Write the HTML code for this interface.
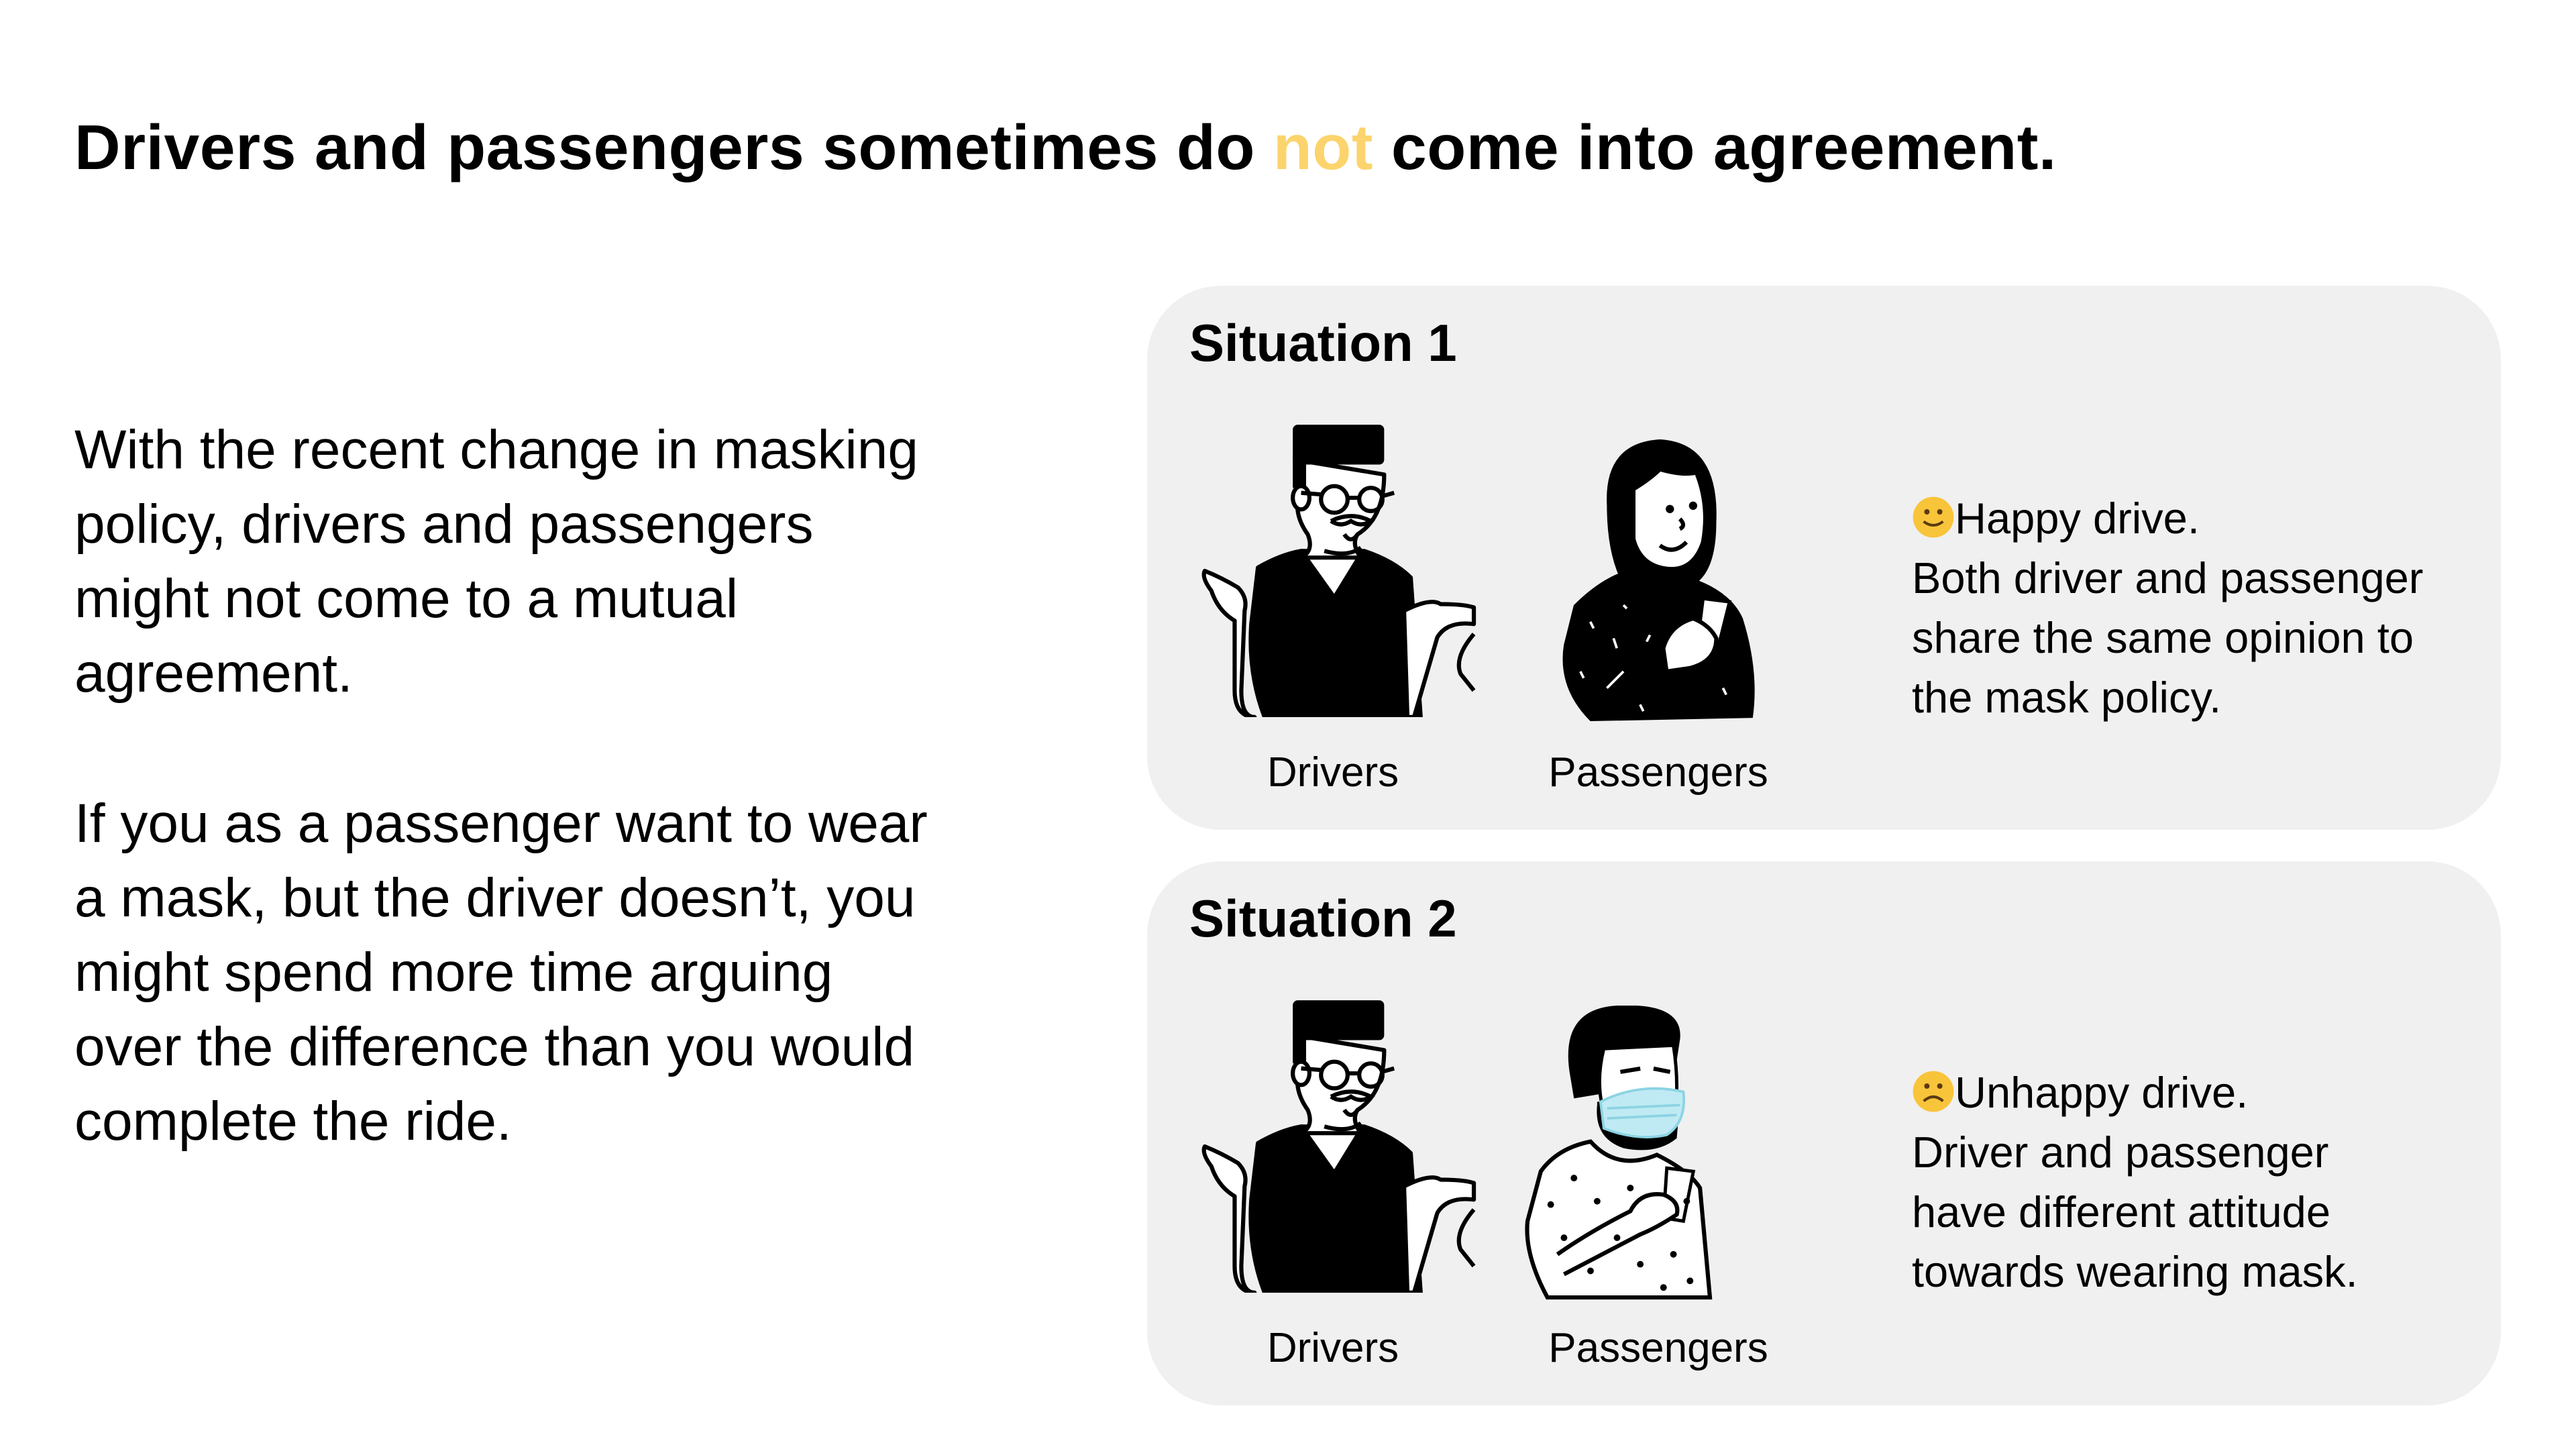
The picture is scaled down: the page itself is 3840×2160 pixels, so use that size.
<!DOCTYPE html>
<html><head><meta charset="utf-8">
<style>
*{margin:0;padding:0;box-sizing:border-box}
body{width:3840px;height:2160px;background:#fff;position:relative;overflow:hidden;font-family:"Liberation Sans",sans-serif;color:#000}
.t{position:absolute;white-space:nowrap}
h1{position:absolute;left:111px;top:166px;font-size:95px;font-weight:bold;white-space:nowrap;letter-spacing:0.5px}
.para{position:absolute;left:111px;font-size:82px;line-height:111px;white-space:nowrap}
.card{position:absolute;left:1710px;width:2018px;height:811px;background:#f0f0f0;border-radius:110px}
.sit{position:absolute;left:63px;font-size:78px;font-weight:bold}
.lbl{position:absolute;font-size:62px;top:690px;transform:translateX(-50%)}
.desc{position:absolute;left:1140px;font-size:65px;line-height:89px;white-space:nowrap}
.emo{display:inline-block;width:64px;height:64px;vertical-align:-8px;margin-right:0px}
svg.fig{position:absolute}
</style></head><body>
<h1>Drivers and passengers sometimes do <span style="color:#fbd46d">not</span> come into agreement.</h1>
<div class="para" style="top:615px">With the recent change in masking<br>policy, drivers and passengers<br>might not come to a mutual<br>agreement.</div>
<div class="para" style="top:1172px">If you as a passenger want to wear<br>a mask, but the driver doesn’t, you<br>might spend more time arguing<br>over the difference than you would<br>complete the ride.</div>

<!-- Card 1 -->
<div class="card" style="top:426px">
  <div class="sit t" style="top:40px">Situation 1</div>
  <svg class="fig" style="left:76px;top:207px" width="416" height="436" viewBox="0 0 168 176">
    <g stroke="#000" stroke-width="2.5" stroke-linejoin="round">
      <path d="M8 100 Q2 92 4 88 Q14 92 24 98 Q30 104 28 112 L26 160 Q26 176 34 176 L32 176 Q22 174 22 160 L22 118 Q12 112 8 100Z" fill="#fff"/>
      <path d="M36 86 Q50 78 62 76 L100 76 Q118 82 128 92 L134 176 L40 176 Q30 150 32 120 Z" fill="#000"/>
      <path d="M62 76 L82 104 L98 78 Z" fill="#fff"/>
      <path d="M124 112 Q140 104 146 108 Q160 108 166 110 L166 120 Q150 118 144 128 L130 176 L126 176 Z" fill="#fff"/>
      <path d="M166 126 Q154 140 158 150 L166 160" fill="none"/>
      <path d="M62 38 Q56 52 66 66 Q70 76 62 80 L98 80 Q92 72 96 66 Q112 56 112 30 L64 22 Z" fill="#fff"/>
      <ellipse cx="62" cy="44" rx="5" ry="7" fill="#fff"/>
    </g>
    <rect x="57" y="0" width="55" height="24" rx="3" fill="#000"/>
    <rect x="57" y="18" width="8" height="20" fill="#000"/>
    <g fill="none" stroke="#000" stroke-width="2.5">
      <circle cx="82" cy="45" r="8"/><circle cx="104" cy="45" r="7"/>
      <path d="M62 41 L74 42 M90 44 L97 44 M111 43 L118 41"/>
      <path d="M80 58 Q92 52 104 58 Q98 62 92 58 Q86 62 80 58"/>
      <path d="M88 66 Q92 72 96 66"/>
      <path d="M76 76 Q90 80 98 74"/>
    </g>
  </svg>
  <svg class="fig" style="left:611px;top:229px" width="297" height="425" viewBox="0 0 120 172">
    <path d="M30 40 Q28 2 62 0 Q98 2 96 50 Q96 80 82 88 L40 88 Q30 70 30 40Z" fill="#000"/>
    <path d="M46 30 Q56 24 62 18 Q76 22 84 20 Q92 40 88 62 Q82 80 66 78 Q50 76 46 60 Z" fill="#fff" stroke="#000" stroke-width="2.5"/>
    <circle cx="68" cy="42" r="2.5"/><circle cx="82" cy="40" r="2.5"/>
    <path d="M62 64 Q70 70 78 62 M74 48 Q78 52 74 54" fill="none" stroke="#000" stroke-width="2.5"/>
    <path d="M10 100 Q28 82 46 78 Q60 90 76 82 Q104 90 112 108 Q122 140 118 168 L20 170 Q0 150 4 124 Z" fill="#000"/>
    <path d="M88 96 L104 98 L96 130 L84 128 Z" fill="#fff" stroke="#000" stroke-width="2"/>
    <path d="M64 126 Q68 112 82 108 Q92 112 96 120 Q96 134 80 138 L66 140 Z" fill="#fff" stroke="#000" stroke-width="2.5"/>
    <g stroke="#fff" stroke-width="1.5"><path d="M20 110 L22 114 M40 100 L42 102 M56 118 L54 122 M14 140 L16 144 M30 150 L40 140 M50 160 L52 164 M100 150 L102 154 M34 120 L36 126"/></g>
  </svg>
  <div class="lbl t" style="left:277px">Drivers</div>
  <div class="lbl t" style="left:762px">Passengers</div>
  <div class="desc" style="top:302px"><svg class="emo" viewBox="0 0 40 40"><circle cx="20" cy="20" r="19" fill="#f8c43a"/><circle cx="14" cy="15" r="2.5" fill="#5b3b12"/><circle cx="26" cy="15" r="2.5" fill="#5b3b12"/><path d="M11 24 Q20 31 29 24" stroke="#5b3b12" stroke-width="2.5" fill="none"/></svg>Happy drive.<br>Both driver and passenger<br>share the same opinion to<br>the mask policy.</div>
</div>

<!-- Card 2 -->
<div class="card" style="top:1284px">
  <div class="sit t" style="top:40px">Situation 2</div>
  <svg class="fig" style="left:76px;top:207px" width="416" height="436" viewBox="0 0 168 176">
    <g stroke="#000" stroke-width="2.5" stroke-linejoin="round">
      <path d="M8 100 Q2 92 4 88 Q14 92 24 98 Q30 104 28 112 L26 160 Q26 176 34 176 L32 176 Q22 174 22 160 L22 118 Q12 112 8 100Z" fill="#fff"/>
      <path d="M36 86 Q50 78 62 76 L100 76 Q118 82 128 92 L134 176 L40 176 Q30 150 32 120 Z" fill="#000"/>
      <path d="M62 76 L82 104 L98 78 Z" fill="#fff"/>
      <path d="M124 112 Q140 104 146 108 Q160 108 166 110 L166 120 Q150 118 144 128 L130 176 L126 176 Z" fill="#fff"/>
      <path d="M166 126 Q154 140 158 150 L166 160" fill="none"/>
      <path d="M62 38 Q56 52 66 66 Q70 76 62 80 L98 80 Q92 72 96 66 Q112 56 112 30 L64 22 Z" fill="#fff"/>
      <ellipse cx="62" cy="44" rx="5" ry="7" fill="#fff"/>
    </g>
    <rect x="57" y="0" width="55" height="24" rx="3" fill="#000"/>
    <rect x="57" y="18" width="8" height="20" fill="#000"/>
    <g fill="none" stroke="#000" stroke-width="2.5">
      <circle cx="82" cy="45" r="8"/><circle cx="104" cy="45" r="7"/>
      <path d="M62 41 L74 42 M90 44 L97 44 M111 43 L118 41"/>
      <path d="M80 58 Q92 52 104 58 Q98 62 92 58 Q86 62 80 58"/>
      <path d="M88 66 Q92 72 96 66"/>
      <path d="M76 76 Q90 80 98 74"/>
    </g>
  </svg>
  <svg class="fig" style="left:562px;top:215px" width="282" height="440" viewBox="0 0 114 178">
    <path d="M28 44 Q20 2 56 0 Q96 -2 94 20 L90 46 L30 56 Z" fill="#000"/>
    <path d="M48 26 L90 24 Q94 50 90 70 L50 70 Q42 50 48 26Z" fill="#fff" stroke="#000" stroke-width="2"/>
    <path d="M58 40 L70 38 M78 38 L88 40" stroke="#000" stroke-width="2.5"/>
    <path d="M44 60 Q42 80 60 86 Q80 90 92 80 L94 56 L44 58 Z" fill="#000"/>
    <path d="M46 58 Q70 46 96 52 Q98 70 86 78 Q68 82 48 74 Z" fill="#bfeaf3" stroke="#8cd3e3" stroke-width="1.5"/>
    <path d="M50 62 L94 60 M50 68 L92 66" stroke="#8cd3e3" stroke-width="1.5"/>
    <path d="M10 100 Q20 86 40 82 Q56 100 80 90 Q100 100 106 110 L112 176 L14 176 Q0 150 2 130 Z" fill="#fff" stroke="#000" stroke-width="2.5"/>
    <path d="M86 98 L102 100 L96 130 L84 128 Z" fill="#fff" stroke="#000" stroke-width="2"/>
    <path d="M20 150 Q40 136 64 124 Q70 112 84 114 Q94 118 92 126 Q80 134 70 138 L24 162" fill="#fff" stroke="#000" stroke-width="2.5"/>
    <g fill="#000"><circle cx="16" cy="120" r="2"/><circle cx="30" cy="104" r="2"/><circle cx="44" cy="118" r="2"/><circle cx="56" cy="140" r="2"/><circle cx="24" cy="140" r="2"/><circle cx="40" cy="160" r="2"/><circle cx="70" cy="156" r="2"/><circle cx="90" cy="150" r="2"/><circle cx="100" cy="166" r="2"/><circle cx="84" cy="170" r="2"/><circle cx="64" cy="110" r="2"/><circle cx="98" cy="118" r="2"/></g>
  </svg>
  <div class="lbl t" style="left:277px">Drivers</div>
  <div class="lbl t" style="left:762px">Passengers</div>
  <div class="desc" style="top:300px"><svg class="emo" viewBox="0 0 40 40"><circle cx="20" cy="20" r="19" fill="#f8c43a"/><circle cx="14" cy="15" r="2.5" fill="#5b3b12"/><circle cx="26" cy="15" r="2.5" fill="#5b3b12"/><path d="M11 29 Q20 21 29 29" stroke="#5b3b12" stroke-width="2.5" fill="none"/></svg>Unhappy drive.<br>Driver and passenger<br>have different attitude<br>towards wearing mask.</div>
</div>
</body></html>
